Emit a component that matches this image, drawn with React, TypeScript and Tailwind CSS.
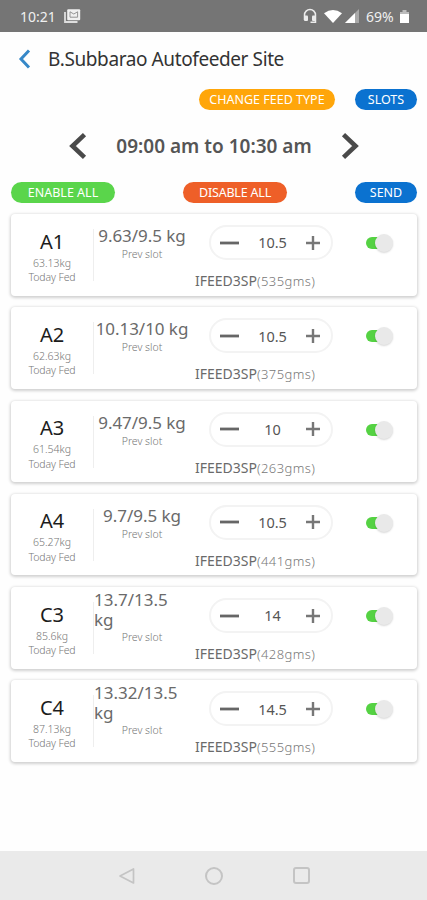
type Feeder = {
  name: string;
  fed: string;
  ratio: string;
  value: string;
  grams: number;
  wrap?: boolean;
};

const FEEDERS: Feeder[] = [
  { name: "A1", fed: "63.13kg", ratio: "9.63/9.5 kg", value: "10.5", grams: 535 },
  { name: "A2", fed: "62.63kg", ratio: "10.13/10 kg", value: "10.5", grams: 375 },
  { name: "A3", fed: "61.54kg", ratio: "9.47/9.5 kg", value: "10", grams: 263 },
  { name: "A4", fed: "65.27kg", ratio: "9.7/9.5 kg", value: "10.5", grams: 441 },
  { name: "C3", fed: "85.6kg", ratio: "13.7/13.5 kg", value: "14", grams: 428, wrap: true },
  { name: "C4", fed: "87.13kg", ratio: "13.32/13.5 kg", value: "14.5", grams: 555, wrap: true },
];

function StatusBar() {
  return (
    <header className="flex h-8 items-center bg-[#757575] pl-5 pr-[18px] text-[14px] text-[#f0f0f0]">
      <span className="w-[37px] whitespace-nowrap">10:21</span>
      <svg className="ml-[7px] h-4 w-[17px]" viewBox="0 0 17 16" fill="none" aria-hidden>
        <path d="M1 4v10h12.5" stroke="#dedede" strokeWidth="1.8" />
        <rect x="3.2" y="1.2" width="13" height="11" rx="1" fill="#f0f0f0" />
        <path d="M6 3.8v5.4h7.6V3.8L9.8 6z" stroke="#8a8a8a" strokeWidth="0.9" />
      </svg>
      <svg className="ml-auto h-4 w-[14px]" viewBox="0 0 14 16" fill="none" aria-hidden>
        <path d="M1.5 12V7a5.5 5.5 0 0 1 11 0v7.3h-5" stroke="#ececec" strokeWidth="1.5" />
        <rect x="1" y="7.5" width="4" height="5.5" rx="1" fill="#ececec" />
        <rect x="9" y="7.5" width="4" height="5.5" rx="1" fill="#ececec" />
      </svg>
      <svg className="ml-[7px] h-4 w-[18px]" viewBox="0 0 18 16" aria-hidden>
        <path d="M0 5.3Q9-1.300 18 5.300L9 15z" fill="#fff" />
      </svg>
      <svg className="ml-[3px] h-4 w-[14px]" viewBox="0 0 14 16" aria-hidden>
        <path d="M0 15 14 1v14z" fill="#a9a9a9" />
        <path d="M0 15 10 5v10z" fill="#fff" />
      </svg>
      <span className="ml-[7px] w-[30px] whitespace-nowrap">69%</span>
      <svg className="ml-[4px] h-[15px] w-[9px]" viewBox="0 0 9 15" aria-hidden>
        <path d="M2.5 1h4v2H9v11H0V3h2.5z" fill="#bcbcbc" />
        <path d="M0 5h9v9H0z" fill="#fff" />
      </svg>
    </header>
  );
}

function Toggle() {
  return (
    <button className="relative mt-[20px] h-[18px] w-[27px]" role="switch" aria-checked="true" aria-label="Feeder enabled">
      <span className="absolute left-0 top-[3px] h-3 w-5 rounded-full bg-[#55d243]" />
      <span className="absolute right-0 top-0 h-[18px] w-[18px] rounded-full bg-[#e9e9e9] shadow-[0_1px_2px_rgba(0,0,0,0.16)]" />
    </button>
  );
}

function Stepper({ value }: { value: string }) {
  return (
    <div className="flex h-[35px] w-[124px] items-center rounded-full border-2 border-[#f3f3f3] pl-[9px] pr-[11px]">
      <svg className="h-[18px] w-[19px] shrink-0" viewBox="0 0 19 18" aria-hidden>
        <path d="M0 9h19" stroke="#666" strokeWidth="2.8" />
      </svg>
      <span className="flex-1 text-center text-[14.5px] leading-none tracking-[-0.1px] text-[#555]">{value}</span>
      <svg className="h-[14px] w-[14px] shrink-0" viewBox="0 0 14 14" aria-hidden>
        <path d="M0 7h14M7 0v14" stroke="#777" strokeWidth="2.4" />
      </svg>
    </div>
  );
}

function FeederCard({ feeder }: { feeder: Feeder }) {
  return (
    <article className="flex h-[81.5px] rounded-[4px] bg-white shadow-[0_1px_3px_1px_rgba(0,0,0,0.18)]">
      <div className="flex w-[82px] shrink-0 flex-col items-center pt-[13.5px]">
        <h2 className="text-[20px] leading-[28px] text-[#1c1c1c]">{feeder.name}</h2>
        <p className="text-[10.5px] font-light leading-[14.5px] text-[#777]">{feeder.fed}</p>
        <p className="whitespace-nowrap text-[10.5px] font-light leading-[15px] tracking-[-0.1px] text-[#777]">Today Fed</p>
      </div>
      <div className="mt-[15px] h-[52px] w-px shrink-0 bg-[#eeeeee]" />
      <div className={`w-[96px] shrink-0 ${feeder.wrap ? "pt-[3px]" : "pt-[12px]"}`}>
        <p
          className={`text-[17px] leading-[20px] text-[#6a6a6a] ${
            feeder.wrap ? "w-[90px]" : "whitespace-nowrap text-center tracking-[-0.05px]"
          }`}
        >
          {feeder.ratio}
        </p>
        <p
          className={`text-center text-[10.5px] font-light leading-[16px] text-[#777] ${
            feeder.wrap ? "-mt-px" : ""
          }`}
        >
          Prev slot
        </p>
      </div>
      <div className="flex w-[176px] shrink-0 flex-col pt-[11px]">
        <div className="pl-[19px]">
          <Stepper value={feeder.value} />
        </div>
        <p className="mt-[11px] whitespace-nowrap pl-[5px] text-[14px] leading-[20px] text-[#6a6a6a]">
          IFEED3SP<span className="text-[13px] font-light tracking-[0.4px] text-[#777]">({feeder.grams}gms)</span>
        </p>
      </div>
      <Toggle />
    </article>
  );
}

export default function App() {
  return (
    <div className="flex h-[900px] w-[427px] flex-col overflow-hidden bg-[#fefefe] font-['Noto_Sans',sans-serif]">
      <StatusBar />

      <div className="flex h-[54px] items-center pl-[18px]">
        <svg className="h-[20px] w-[13px]" viewBox="0 0 13 20" fill="none" aria-hidden>
          <path d="M11 1.5 3 10l8 8.5" stroke="#3688c8" strokeWidth="3" />
        </svg>
        <h1 className="ml-[17px] whitespace-nowrap text-[19px] leading-none tracking-[-0.4px] text-[#333]">
          B.Subbarao Autofeeder Site
        </h1>
      </div>

      <div className="mt-[3px] flex h-[21px] justify-end gap-[20px] pr-[10px] text-[12.5px] leading-[21px] text-white">
        <button className="w-[136px] whitespace-nowrap rounded-full bg-[#ffa60a]">CHANGE FEED TYPE</button>
        <button className="w-[62px] rounded-full bg-[#0b72d0]">SLOTS</button>
      </div>

      <div className="mt-[17px] flex h-[38px] items-center pl-[69px] pr-[68px]">
        <svg className="h-[26px] w-[18px]" viewBox="0 0 18 26" fill="none" aria-hidden>
          <path d="M15.5 1.7 3.5 13l12 11.3" stroke="#4a4a4a" strokeWidth="4.6" />
        </svg>
        <p className="flex-1 whitespace-nowrap text-center text-[19px] font-semibold leading-none text-[#555]">
          09:00 am to 10:30 am
        </p>
        <svg className="h-[26px] w-[18px]" viewBox="0 0 18 26" fill="none" aria-hidden>
          <path d="M2.5 1.7 14.5 13l-12 11.3" stroke="#4a4a4a" strokeWidth="4.6" />
        </svg>
      </div>

      <div className="mt-[17px] flex h-[21px] pl-[11px] text-[12.5px] leading-[21px] text-white">
        <button className="w-[104px] whitespace-nowrap rounded-full bg-[#5ad54b]">ENABLE ALL</button>
        <button className="ml-[68px] w-[104px] whitespace-nowrap rounded-full bg-[#ee5f28] tracking-[-0.2px]">
          DISABLE ALL
        </button>
        <button className="ml-[68px] w-[62px] rounded-full bg-[#0b72d0]">SEND</button>
      </div>

      <main className="mt-[11px] flex flex-col gap-[11.8px] pl-[11px] pr-[10px]">
        {FEEDERS.map((feeder) => (
          <FeederCard key={feeder.name} feeder={feeder} />
        ))}
      </main>

      <nav className="mt-auto flex h-[49px] items-center bg-[#eaeaea] pl-[118px]">
        <svg className="h-[18px] w-[17px]" viewBox="0 0 17 18" fill="none" aria-hidden>
          <path d="M2 9 15.5 2v14z" stroke="#c4c4c4" strokeWidth="1.7" strokeLinejoin="round" />
        </svg>
        <span className="ml-[70px] h-[18px] w-[18px] rounded-full border-2 border-[#c4c4c4]" />
        <span className="ml-[70px] h-[17px] w-[17px] rounded-[3px] border-2 border-[#c4c4c4]" />
      </nav>
    </div>
  );
}
